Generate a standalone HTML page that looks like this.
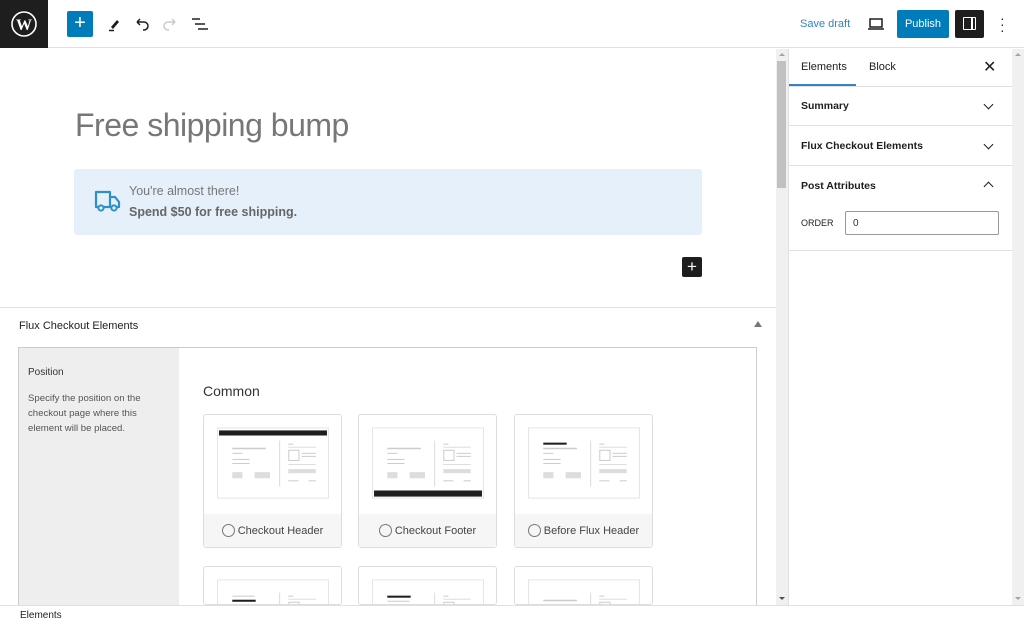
<!DOCTYPE html>
<html style="width:1024px;height:625px;overflow:hidden"><head><meta charset="utf-8"><style>
*{box-sizing:border-box;margin:0;padding:0}
body{width:1024px;height:625px;overflow:hidden;background:#fff;font-family:"Liberation Sans",sans-serif;position:relative;color:#1e1e1e}
.abs{position:absolute}
.top{position:absolute;left:0;top:0;width:1024px;height:48px;border-bottom:1px solid #e0e0e0;background:#fff}
.card{position:absolute;width:139px;height:134px;border:1px solid #ddd;border-radius:3px;background:#fff}
.card svg{position:absolute;left:13px;top:12px}
.card .lab{position:absolute;left:0;right:0;bottom:0;height:33px;background:#f6f6f6;font-size:11px;color:#444;display:flex;align-items:center;justify-content:center}
.rad{width:13px;height:13px;border:1px solid #777;border-radius:50%;margin-right:3px}
.sb{font-size:10.5px;font-weight:bold;color:#1e1e1e}
.chev{position:absolute;width:7px;height:7px;border-right:1.6px solid #1e1e1e;border-bottom:1.6px solid #1e1e1e}
#main{position:absolute;left:0;top:49px;width:776px;height:556px;overflow:hidden}
#main .in{position:absolute;left:0;top:-49px;width:776px;height:605px;overflow:hidden}
.short{height:39px;overflow:hidden}
</style></head><body>
<div class="top">
 <div class="abs" style="left:0;top:0;width:48px;height:48px;background:#1e1e1e">
  <svg width="48" height="48" viewBox="0 0 48 48"><circle cx="24" cy="24" r="12" fill="none" stroke="#fff" stroke-width="1.6"/><text x="24" y="30" font-size="16" font-weight="bold" fill="#fff" text-anchor="middle" font-family="Liberation Serif">W</text></svg>
 </div>
 <div class="abs" style="left:67px;top:11px;width:26px;height:26px;background:#007cba;border-radius:2px;color:#fff;font-size:20px;line-height:25px;text-align:center">+</div>
 <svg class="abs" style="left:104px;top:14px" width="20" height="20" viewBox="0 0 20 20"><path d="M7 13 L13 6 L15 8 L9 15 Z" fill="#1e1e1e"/><path d="M5 16.5 H10" stroke="#1e1e1e" stroke-width="1.5"/></svg>
 <svg class="abs" style="left:132px;top:14px" width="20" height="20" viewBox="0 0 20 20"><path d="M5 8 H12 A4 4 0 0 1 12 16 H11 M5 8 L8 5 M5 8 L8 11" fill="none" stroke="#1e1e1e" stroke-width="1.5"/></svg>
 <svg class="abs" style="left:160px;top:14px" width="20" height="20" viewBox="0 0 20 20"><path d="M15 8 H8 A4 4 0 0 0 8 16 H9 M15 8 L12 5 M15 8 L12 11" fill="none" stroke="#ccc" stroke-width="1.5"/></svg>
 <svg class="abs" style="left:190px;top:14px" width="20" height="20" viewBox="0 0 20 20"><path d="M2 5 H10 M5 10 H15 M8 15 H18" stroke="#1e1e1e" stroke-width="1.5"/></svg>
 <div class="abs" style="left:800px;top:18px;font-size:11px;color:#3582c4">Save draft</div>
 <svg class="abs" style="left:866px;top:14px" width="20" height="20" viewBox="0 0 20 20"><rect x="4" y="5" width="12" height="8" fill="none" stroke="#1e1e1e" stroke-width="1.5"/><path d="M2 15 H18" stroke="#1e1e1e" stroke-width="1.5"/></svg>
 <div class="abs" style="left:897px;top:10px;width:52px;height:28px;background:#007cba;border-radius:2px;color:#fff;font-size:11px;line-height:28px;text-align:center">Publish</div>
 <div class="abs" style="left:955px;top:10px;width:29px;height:28px;background:#1e1e1e;border-radius:2px"><div class="abs" style="left:8px;top:7px;width:13px;height:13px;border:1.5px solid #fff;border-radius:1px"></div><div class="abs" style="left:16px;top:7px;width:1.5px;height:13px;background:#fff"></div></div>
 <div class="abs" style="left:1000px;top:15px;font-size:14px;line-height:6px;color:#1e1e1e">·<br>·<br>·</div>
</div>

<div id="main"><div class="in">
<div class="abs" style="left:75px;top:107px;font-size:32px;color:#777;font-weight:300;letter-spacing:-0.5px">Free shipping bump</div>
<div class="abs" style="left:74px;top:169px;width:628px;height:66px;background:#e6f0fa;border-radius:3px">
 <svg class="abs" style="left:20px;top:18px" width="28" height="28" viewBox="0 0 28 28"><path d="M2 5 H16 V20 H2 Z M16 10 H21 L25 15 V20 H16" fill="none" stroke="#2f8fc9" stroke-width="2.2" stroke-linejoin="round"/><circle cx="7" cy="21" r="2.6" fill="#e6f0fa" stroke="#2f8fc9" stroke-width="2"/><circle cx="20" cy="21" r="2.6" fill="#e6f0fa" stroke="#2f8fc9" stroke-width="2"/></svg>
 <div class="abs" style="left:55px;top:15px;font-size:12.5px;color:#777">You're almost there!</div>
 <div class="abs" style="left:55px;top:36px;font-size:12.5px;color:#666;font-weight:bold">Spend $50 for free shipping.</div>
</div>
<div class="abs" style="left:682px;top:257px;width:20px;height:20px;background:#1e1e1e;border-radius:2px;color:#fff;font-size:17px;line-height:19px;text-align:center">+</div>

<div class="abs" style="left:0;top:307px;width:776px;height:1px;background:#e0e0e0"></div>
<div class="abs" style="left:19px;top:320px;font-size:11px;color:#1e1e1e">Flux Checkout Elements</div>
<div class="abs" style="left:754px;top:321px;width:0;height:0;border-left:4px solid transparent;border-right:4px solid transparent;border-bottom:6px solid #777"></div>
<div class="abs" style="left:18px;top:347px;width:739px;height:258px;border:1px solid #ccc;border-bottom:none;background:#fff"></div>
<div class="abs" style="left:19px;top:348px;width:160px;height:257px;background:#eee"></div>
<div class="abs" style="left:28px;top:367px;font-size:10px;color:#333">Position</div>
<div class="abs" style="left:28px;top:391px;width:140px;font-size:9.6px;line-height:15px;color:#555">Specify the position on the checkout page where this element will be placed.</div>
<div class="abs" style="left:203px;top:383px;font-size:14px;color:#333">Common</div>

<svg width="0" height="0" style="position:absolute"><defs>
<g id="base">
 <rect x="0.5" y="0.5" width="109" height="69" fill="#fff" stroke="#e6e6e6"/>
 <rect x="61" y="13" width="1" height="45" fill="#ddd"/>
 <rect x="70" y="16" width="5" height="1" fill="#ccc"/><rect x="70" y="19" width="27" height="1" fill="#ddd"/>
 <rect x="70.5" y="22.5" width="10" height="10" fill="#fff" stroke="#ccc"/>
 <rect x="83" y="25" width="14" height="1" fill="#ccc"/><rect x="83" y="28" width="14" height="1" fill="#ccc"/>
 <rect x="70" y="36" width="27" height="1" fill="#ddd"/><rect x="70" y="41" width="27" height="4" fill="#ddd"/>
 <rect x="70" y="52" width="10" height="1" fill="#ccc"/><rect x="90" y="52" width="7" height="1" fill="#ccc"/>
 <rect x="15" y="44" width="10" height="6" fill="#ddd"/><rect x="37" y="44" width="15" height="6" fill="#ddd"/>
</g>
<g id="lft"><rect x="15" y="20" width="33" height="1.5" fill="#ccc"/><rect x="15" y="25" width="10" height="1" fill="#ccc"/><rect x="15" y="31" width="17" height="1" fill="#ccc"/><rect x="15" y="35" width="17" height="1" fill="#ccc"/></g>
</defs></svg>

<div class="card" style="left:203px;top:414px"><svg width="112" height="72" viewBox="0 0 110 70"><use href="#base"/><use href="#lft"/><rect x="2" y="3" width="106" height="5" fill="#1e1e1e"/></svg><div class="lab"><span class="rad"></span>Checkout Header</div></div>
<div class="card" style="left:358px;top:414px"><svg width="112" height="72" viewBox="0 0 110 70"><use href="#base"/><use href="#lft"/><rect x="2" y="62" width="106" height="6" fill="#1e1e1e"/></svg><div class="lab"><span class="rad"></span>Checkout Footer</div></div>
<div class="card" style="left:514px;top:414px"><svg width="112" height="72" viewBox="0 0 110 70"><use href="#base"/><rect x="15" y="15" width="23" height="2" fill="#1e1e1e"/><use href="#lft"/></svg><div class="lab"><span class="rad"></span>Before Flux Header</div></div>
<div class="card short" style="left:203px;top:566px"><svg width="112" height="72" viewBox="0 0 110 70"><use href="#base"/><rect x="15" y="16" width="22" height="1" fill="#ccc"/><rect x="15" y="20" width="23" height="2" fill="#1e1e1e"/></svg></div>
<div class="card short" style="left:358px;top:566px"><svg width="112" height="72" viewBox="0 0 110 70"><use href="#base"/><rect x="15" y="16" width="23" height="2" fill="#1e1e1e"/><rect x="15" y="21" width="22" height="1" fill="#ccc"/></svg></div>
<div class="card short" style="left:514px;top:566px"><svg width="112" height="72" viewBox="0 0 110 70"><use href="#base"/><use href="#lft"/></svg></div>
</div></div>

<!-- main scrollbar -->
<div class="abs" style="left:776px;top:49px;width:12px;height:556px;background:#f0f0f0"></div>
<div class="abs" style="left:777px;top:61px;width:9px;height:127px;background:#c1c1c1"></div>
<div class="abs" style="left:779px;top:53px;border-left:3px solid transparent;border-right:3px solid transparent;border-bottom:3px solid #a3a3a3"></div>
<div class="abs" style="left:779px;top:597px;border-left:3px solid transparent;border-right:3px solid transparent;border-top:3px solid #505050"></div>

<!-- sidebar -->
<div class="abs" style="left:788px;top:49px;width:1px;height:556px;background:#e0e0e0"></div>
<div class="abs" style="left:1012px;top:49px;width:12px;height:556px;background:#f0f0f0"></div>
<div class="abs" style="left:1015px;top:53px;border-left:3px solid transparent;border-right:3px solid transparent;border-bottom:3px solid #a3a3a3"></div>
<div class="abs" style="left:1015px;top:597px;border-left:3px solid transparent;border-right:3px solid transparent;border-top:3px solid #a3a3a3"></div>
<div class="abs" style="left:801px;top:61px;font-size:11px">Elements</div>
<div class="abs" style="left:789px;top:84px;width:67px;height:2px;background:#3582c4"></div>
<div class="abs" style="left:869px;top:61px;font-size:11px">Block</div>
<div class="abs" style="left:983px;top:57px;font-size:16px">✕</div>
<div class="abs" style="left:789px;top:86px;width:223px;height:1px;background:#e0e0e0"></div>
<div class="abs sb" style="left:801px;top:100px">Summary</div><div class="chev" style="left:985px;top:101px;transform:rotate(45deg)"></div>
<div class="abs" style="left:789px;top:125px;width:223px;height:1px;background:#e0e0e0"></div>
<div class="abs sb" style="left:801px;top:140px">Flux Checkout Elements</div><div class="chev" style="left:985px;top:141px;transform:rotate(45deg)"></div>
<div class="abs" style="left:789px;top:165px;width:223px;height:1px;background:#e0e0e0"></div>
<div class="abs sb" style="left:801px;top:180px">Post Attributes</div><div class="chev" style="left:985px;top:183px;transform:rotate(-135deg)"></div>
<div class="abs" style="left:801px;top:218px;font-size:9px;color:#1e1e1e">ORDER</div>
<div class="abs" style="left:845px;top:211px;width:154px;height:24px;border:1px solid #999;border-radius:2px;font-size:10px;padding:6px 0 0 7px;color:#333">0</div>
<div class="abs" style="left:789px;top:250px;width:223px;height:1px;background:#e0e0e0"></div>

<!-- footer -->
<div class="abs" style="left:0;top:605px;width:1024px;height:20px;background:#fff;border-top:1px solid #e0e0e0"></div>
<div class="abs" style="left:20px;top:610px;font-size:10px;color:#1e1e1e">Elements</div>
</body></html>
